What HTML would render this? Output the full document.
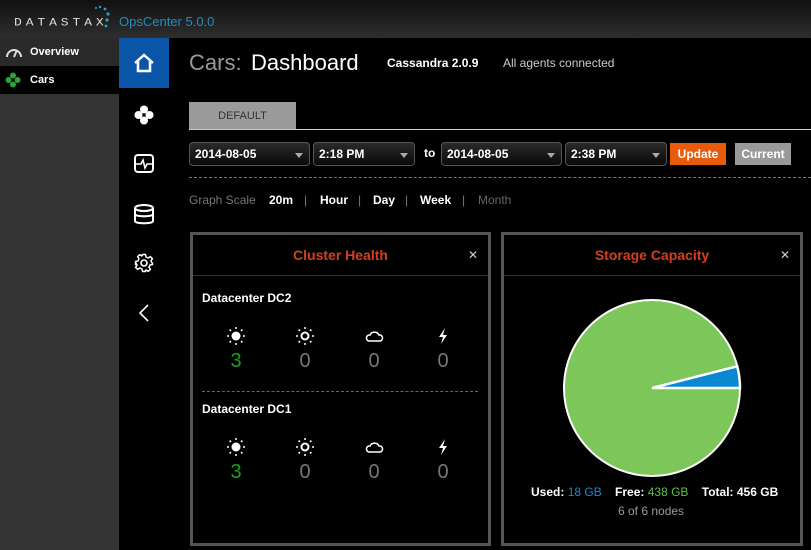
<!DOCTYPE html>
<html><head><meta charset="utf-8"><style>
*{margin:0;padding:0;box-sizing:border-box}
body{width:811px;height:550px;background:#000;font-family:"Liberation Sans",Arial,sans-serif;position:relative;overflow:hidden;color:#fff}
.abs{position:absolute}
#hdr{left:0;top:0;width:811px;height:38px;background:linear-gradient(#111,#2e2e2e)}
#side{left:0;top:38px;width:119px;height:512px;background:#333}
.nav{left:0;width:119px;height:28px;font-size:11px;font-weight:bold;line-height:28px;padding-left:30px}
#bar{left:119px;top:38px;width:50px;height:512px;background:#000}
.sel{border:1px solid #555;border-radius:4px;height:24px;font-size:12px;font-weight:bold;line-height:22px;padding-left:5px;background:linear-gradient(#2a2a2a,#0a0a0a)}
.sel:after{content:"";position:absolute;right:6px;top:10px;border:4px solid transparent;border-top:5px solid #aaa}
.panel{border:3px solid #555;background:#000}
.ph{height:41px;border-bottom:1px solid #333;text-align:center;color:#d2401b;font-weight:bold;font-size:14px;line-height:41px;position:relative}
.x{position:absolute;right:10px;top:0;color:#ccc;font-weight:normal;font-size:12px}
.dc{font-size:12px;font-weight:bold}
.num{font-size:20px;color:#777;text-align:center;width:40px}
.gs{top:193px;font-size:12px;font-weight:bold}
.sep{top:193px;font-size:12px;color:#777}
</style></head><body>
<div id="hdr" class="abs"></div>
<div class="abs" style="left:14px;top:15px;font-size:13px;letter-spacing:3.9px;color:#ddd;font-family:'Liberation Mono',monospace;transform:scaleY(0.85)">DATASTAX</div>
<svg class="abs" style="left:94px;top:5px" width="18" height="24"><circle cx="2" cy="3" r="1" fill="#2ba0d0"/><circle cx="6" cy="2" r="1.2" fill="#2ba0d0"/><circle cx="11" cy="4" r="1.4" fill="#2ba0d0"/><circle cx="14" cy="9" r="1.6" fill="#2ba0d0"/><circle cx="13" cy="15" r="1.6" fill="#2ba0d0"/><circle cx="12" cy="21" r="1.4" fill="#2ba0d0"/></svg>
<div class="abs" style="left:119px;top:14px;font-size:13px;color:#1d8fc0">OpsCenter 5.0.0</div>
<div id="side" class="abs"></div>
<div class="abs nav" style="top:38px;background:#2a2a2a">Overview</div>
<svg class="abs" style="left:5px;top:45px" width="18" height="14"><path d="M2 12A7 7 0 0 1 16 12" fill="none" stroke="#ddd" stroke-width="2"/><path d="M9 12L12 5" stroke="#ddd" stroke-width="2"/></svg>
<div class="abs nav" style="top:66px;background:#000">Cars</div>
<svg class="abs" style="left:5px;top:72px" width="16" height="16"><g fill="#2aa53a"><circle cx="8" cy="3.5" r="3"/><circle cx="8" cy="12.5" r="3"/><circle cx="3.5" cy="8" r="3"/><circle cx="12.5" cy="8" r="3"/></g></svg>
<div id="bar" class="abs"></div>
<div class="abs" style="left:119px;top:38px;width:50px;height:50px;background:#0a55a8"></div>
<svg class="abs" style="left:132px;top:51px" width="24" height="24"><path d="M3 12L12 4L21 12M6 10V20H18V10" fill="none" stroke="#fff" stroke-width="2.5"/></svg>
<svg class="abs" style="left:134px;top:105px" width="20" height="20"><g fill="#fff"><circle cx="10" cy="4.5" r="4"/><circle cx="10" cy="15.5" r="4"/><circle cx="4.5" cy="10" r="4"/><circle cx="15.5" cy="10" r="4"/></g></svg>
<svg class="abs" style="left:133px;top:153px" width="22" height="22"><rect x="2" y="2" width="18" height="17" rx="3" fill="none" stroke="#fff" stroke-width="2"/><path d="M2 11H8L10 7L12 15L14 11H20" fill="none" stroke="#fff" stroke-width="1.6"/></svg>
<svg class="abs" style="left:133px;top:203px" width="22" height="22"><g fill="none" stroke="#fff" stroke-width="2"><ellipse cx="11" cy="5" rx="9" ry="3"/><path d="M2 5V18C2 21 20 21 20 18V5M2 11C2 14 20 14 20 11"/></g></svg>
<svg class="abs" style="left:134px;top:253px" width="20" height="20"><circle cx="10" cy="10" r="3" fill="none" stroke="#fff" stroke-width="1.6"/><path d="M8.5 1.5H11.5L12 4L14.2 5L16.3 3.6L18.4 5.7L17 7.8L18 10L18.5 10V11.5L16 12L15 14.2L16.4 16.3L14.3 18.4L12.2 17L11.5 17.3V18.5H8.5L8 16L5.8 15L3.7 16.4L1.6 14.3L3 12.2L2 10L1.5 11.5V8.5L4 8L5 5.8L3.6 3.7L5.7 1.6L7.8 3L8 2.7Z" fill="none" stroke="#fff" stroke-width="1.5" stroke-linejoin="round"/></svg>
<svg class="abs" style="left:137px;top:303px" width="14" height="20"><path d="M11 2L3 10L11 18" fill="none" stroke="#fff" stroke-width="1.6"/></svg>

<div class="abs" style="left:189px;top:50px;font-size:22px;color:#999">Cars:</div>
<div class="abs" style="left:251px;top:50px;font-size:22px;color:#fff">Dashboard</div>
<div class="abs" style="left:387px;top:56px;font-size:12px;font-weight:bold">Cassandra 2.0.9</div>
<div class="abs" style="left:503px;top:56px;font-size:12px;color:#ccc">All agents connected</div>
<div class="abs" style="left:189px;top:102px;width:107px;height:28px;background:#9a9a9a;color:#333;font-size:11px;text-align:center;line-height:28px">DEFAULT</div>
<div class="abs" style="left:189px;top:129px;width:622px;height:1px;background:#ccc"></div>
<div class="abs sel" style="left:189px;top:142px;width:121px">2014-08-05</div>
<div class="abs sel" style="left:313px;top:142px;width:102px">2:18 PM</div>
<div class="abs" style="left:424px;top:146px;font-size:12px;font-weight:bold">to</div>
<div class="abs sel" style="left:441px;top:142px;width:121px">2014-08-05</div>
<div class="abs sel" style="left:565px;top:142px;width:102px">2:38 PM</div>
<div class="abs" style="left:670px;top:143px;width:56px;height:22px;background:#e85a0c;font-size:12px;font-weight:bold;text-align:center;line-height:22px">Update</div>
<div class="abs" style="left:735px;top:143px;width:56px;height:22px;background:#999;font-size:12px;font-weight:bold;text-align:center;line-height:22px">Current</div>
<div class="abs" style="left:189px;top:177px;width:622px;border-top:1px dashed #777"></div>
<div class="abs" style="left:189px;top:193px;font-size:12px;color:#777">Graph Scale</div>
<div class="abs gs" style="left:269px">20m</div><div class="abs sep" style="left:304px">|</div>
<div class="abs gs" style="left:320px">Hour</div><div class="abs sep" style="left:358px">|</div>
<div class="abs gs" style="left:373px">Day</div><div class="abs sep" style="left:405px">|</div>
<div class="abs gs" style="left:420px">Week</div><div class="abs sep" style="left:462px">|</div>
<div class="abs" style="left:478px;top:193px;font-size:12px;color:#666">Month</div>

<div class="abs panel" style="left:190px;top:232px;width:301px;height:314px">
<div class="ph">Cluster Health<span class="x">✕</span></div>
</div>
<div class="abs dc" style="left:202px;top:291px">Datacenter DC2</div>
<div class="abs dc" style="left:202px;top:402px">Datacenter DC1</div>
<div class="abs" style="left:202px;top:391px;width:276px;border-top:1px dashed #666"></div>

<svg width="0" height="0" style="position:absolute"><defs>
<g id="s1"><circle cx="10" cy="10" r="4.5" fill="#fff"/><g fill="#fff"><circle cx="10" cy="2" r="1"/><circle cx="10" cy="18" r="1"/><circle cx="2" cy="10" r="1"/><circle cx="18" cy="10" r="1"/><circle cx="4.3" cy="4.3" r="1"/><circle cx="15.7" cy="4.3" r="1"/><circle cx="4.3" cy="15.7" r="1"/><circle cx="15.7" cy="15.7" r="1"/></g></g>
<g id="s2"><circle cx="10" cy="10" r="3.5" fill="none" stroke="#fff" stroke-width="2"/><g fill="#fff"><circle cx="10" cy="2" r="1"/><circle cx="10" cy="18" r="1"/><circle cx="2" cy="10" r="1"/><circle cx="18" cy="10" r="1"/><circle cx="4.3" cy="4.3" r="1"/><circle cx="15.7" cy="4.3" r="1"/><circle cx="4.3" cy="15.7" r="1"/><circle cx="15.7" cy="15.7" r="1"/></g></g>
<g id="s3"><path d="M5 15H16A3 3 0 0 0 15 9A5 5 0 0 0 6 9A3 3 0 0 0 5 15Z" fill="none" stroke="#fff" stroke-width="1.5"/></g>
<g id="s4"><path d="M12 2L6 11H10L8 18L14 9H10Z" fill="#fff"/></g>
</defs></svg>
<svg class="abs" style="left:226px;top:326px" width="20" height="20"><use href="#s1"/></svg>
<svg class="abs" style="left:295px;top:326px" width="20" height="20"><use href="#s2"/></svg>
<svg class="abs" style="left:364px;top:326px" width="20" height="20"><use href="#s3"/></svg>
<svg class="abs" style="left:433px;top:326px" width="20" height="20"><use href="#s4"/></svg>
<div class="abs num" style="left:216px;top:350px;color:#1aa01a">3</div>
<div class="abs num" style="left:285px;top:350px">0</div>
<div class="abs num" style="left:354px;top:350px">0</div>
<div class="abs num" style="left:423px;top:350px">0</div>
<svg class="abs" style="left:226px;top:437px" width="20" height="20"><use href="#s1"/></svg>
<svg class="abs" style="left:295px;top:437px" width="20" height="20"><use href="#s2"/></svg>
<svg class="abs" style="left:364px;top:437px" width="20" height="20"><use href="#s3"/></svg>
<svg class="abs" style="left:433px;top:437px" width="20" height="20"><use href="#s4"/></svg>
<div class="abs num" style="left:216px;top:461px;color:#1aa01a">3</div>
<div class="abs num" style="left:285px;top:461px">0</div>
<div class="abs num" style="left:354px;top:461px">0</div>
<div class="abs num" style="left:423px;top:461px">0</div>

<div class="abs panel" style="left:501px;top:232px;width:302px;height:314px">
<div class="ph">Storage Capacity<span class="x">✕</span></div>
</div>
<svg class="abs" style="left:560px;top:296px" width="184" height="184">
<circle cx="92" cy="92" r="88" fill="#7dc75a" stroke="#fff" stroke-width="2"/>
<path d="M92 92L180 92A88 88 0 0 0 177.3 70.3Z" fill="#0a88d0" stroke="#fff" stroke-width="2.5"/>
</svg>
<div class="abs" style="left:531px;top:485px;font-size:12px;font-weight:bold">Used: <span style="color:#1a8ad0;font-weight:normal">18 GB</span>&nbsp;&nbsp;&nbsp; Free: <span style="color:#5cc040;font-weight:normal">438 GB</span>&nbsp;&nbsp;&nbsp; Total: 456 GB</div>
<div class="abs" style="left:618px;top:504px;font-size:12px;color:#999">6 of 6 nodes</div>
</body></html>
